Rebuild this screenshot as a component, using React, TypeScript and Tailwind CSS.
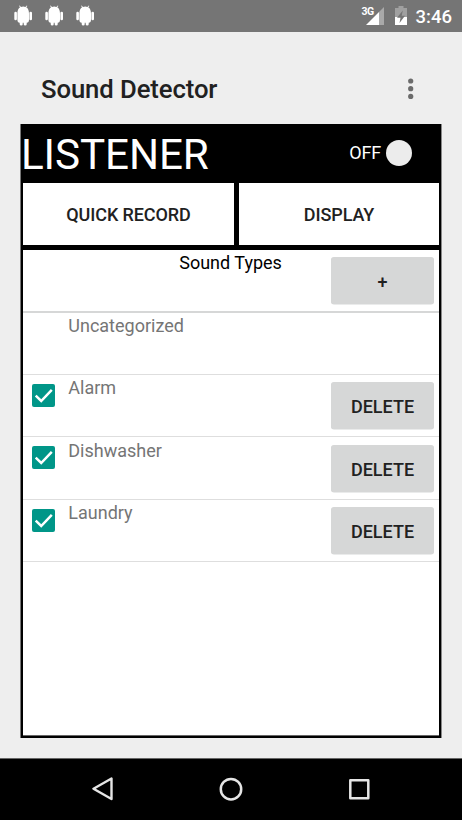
import React from "react";

function Robot() {
  return (
    <svg className="h-[22px] w-[18px]" viewBox="0 0 18 22" fill="#fff">
      <path d="M3.400 8.500C3.400 5 4.500 3.100 6.200 2.200L5 .9l.6-.4 1.400 1.400a7 7 0 0 1 4.400 0L12.800.5l.6.4-1.200 1.300c1.700.9 2.800 2.800 2.800 6.300v6q0 3.300-2.300 3.300v1.400q0 1.300-1.500 1.300t-1.500-1.300v-1.400h-1v1.400q0 1.300-1.500 1.300t-1.500-1.300v-1.400q-2.300 0-2.300-3.300Z" />
      <rect x="0.300" y="6.800" width="2.600" height="8.500" rx="1.200" />
      <rect x="15.400" y="6.800" width="2.600" height="8.500" rx="1.200" />
    </svg>
  );
}

function StatusBar() {
  return (
    <header className="flex h-8 shrink-0 items-start justify-between bg-[#757575] text-white">
      <div className="flex gap-[13px] pt-[5px] pl-[14px]">
        <Robot />
        <Robot />
        <Robot />
      </div>
      <div className="flex pr-[10px]">
        <span className="mt-[6px] w-[12px] text-[10.500px] leading-[12px] font-bold tracking-[-0.700px]">3G</span>
        <svg className="-ml-[8px] mt-[7px] h-[18px] w-[18px]" viewBox="0 0 18 18">
          <path d="M13 5 18 0v18h-5Z" fill="#a9a9a9" />
          <path d="M0 18 13 5v13Z" fill="#fff" />
        </svg>
        <svg className="mt-[6px] ml-[11px] h-[19px] w-[12px]" viewBox="0 0 12 19">
          <path d="M0 2h3.500V0h5v2H12v9H0Z" fill="#a0a0a0" />
          <path d="M0 11h12v8H0Z" fill="#fff" />
          <path d="M7.800 4.500 2 11.700h3.500L4.500 17 10 9.800H6.700Z" fill="#757575" />
        </svg>
        <span className="ml-[9px] text-[18.500px] leading-[34px] font-medium">3:46</span>
      </div>
    </header>
  );
}

function GrayButton({ label }: { label: string }) {
  return (
    <button className="mr-[5px] block h-[47px] w-[103px] rounded-[3px] bg-[#d6d7d7] pt-[2px] text-[18px] font-medium text-[#212121] shadow-[0_0.500px_0.500px_#d6d7d7]">
      {label}
    </button>
  );
}

function Check() {
  return (
    <svg className="h-[23px] w-[23px] rounded-[2px] bg-[#009688]" viewBox="0 0 23 23">
      <path d="M3.700 11.700 9.200 17 19.800 5.800" fill="none" stroke="#fff" strokeWidth="2.500" />
    </svg>
  );
}

const rows = [
  { name: "Alarm", frame: "h-[62px]", check: "pt-[9px]", text: "pt-0", button: "pt-[7.400px]" },
  { name: "Dishwasher", frame: "h-[63px]", check: "pt-[9px]", text: "pt-px", button: "pt-[8px]" },
  { name: "Laundry", frame: "h-[62px]", check: "pt-[8.500px]", text: "pt-0", button: "pt-[7px]" },
];

export default function App() {
  return (
    <div className="flex h-[820px] w-[462px] flex-col overflow-hidden bg-[#eeeeee] font-['Roboto',sans-serif]">
      <StatusBar />
      <div className="flex h-[92px] shrink-0 items-center justify-between pr-[48px] pl-[41px]">
        <h1 className="pt-[22px] text-[25.700px] leading-[30px] font-medium tracking-[-0.100px] text-[#212121]">Sound Detector</h1>
        <svg className="mt-[21px] h-[22px] w-[6px]" viewBox="0 0 6 22" fill="#6b6b6b">
          <circle cx="2.700" cy="3" r="2.600" />
          <circle cx="2.700" cy="10.700" r="2.600" />
          <circle cx="2.700" cy="18.400" r="2.600" />
        </svg>
      </div>

      <main className="mx-[20px] flex h-[614px] shrink-0 flex-col border-x border-l-[#777] border-r-[#888] bg-black px-[2px] pb-[2px]">
        <div className="flex h-[59px] shrink-0 items-start justify-between text-white">
          <div className="-ml-[2px] pt-[1px] text-[42.200px] leading-[60px] tracking-[-0.100px]">LISTENER</div>
          <div className="flex items-start pt-[15px] pr-[27px]">
            <span className="pt-px text-[18px] leading-[26px] tracking-[-0.200px]">OFF</span>
            <span className="mt-[0.600px] ml-[5px] h-[26px] w-[26px] rounded-full bg-[#ececec]" />
          </div>
        </div>

        <div className="flex h-[62px] shrink-0 gap-[5px] text-[18px] font-medium tracking-[-0.100px] text-[#212121]">
          <button className="w-[211px] bg-white pt-px">QUICK RECORD</button>
          <button className="flex-1 bg-white pt-px">DISPLAY</button>
        </div>

        <div className="mt-[5px] flex flex-1 flex-col border-b border-[#666] bg-white text-[18px] leading-[26px] text-[#757575]">
          <div className="flex h-[63px] shrink-0 justify-between border-b-2 border-[#d6d7d7] text-black">
            <span className="pl-[156.200px]">Sound Types</span>
            <div className="pt-[7.400px]">
              <GrayButton label="+" />
            </div>
          </div>
          <div className="h-[62px] shrink-0 border-b border-[#dedede] pl-[45.300px]">Uncategorized</div>
          {rows.map((row) => (
            <div key={row.name} className={`flex shrink-0 border-b border-[#dedede] pl-[9px] ${row.frame}`}>
              <div className={row.check}>
                <Check />
              </div>
              <span className={`flex-1 pl-[13.300px] ${row.text}`}>{row.name}</span>
              <div className={row.button}>
                <GrayButton label="DELETE" />
              </div>
            </div>
          ))}
        </div>
      </main>

      <div className="h-[20px] shrink-0" />
      <nav className="flex flex-1 items-start justify-between border-t border-[#666] bg-black pt-[18px] pr-[91px] pl-[91px]">
        <svg className="h-[26px] w-[24px]" viewBox="0 0 24 26" fill="none" stroke="#e5e5e5" strokeWidth="2.400" strokeLinejoin="round">
          <path d="M20.500 1.500v20.500L2.500 11.700Z" />
        </svg>
        <svg className="h-[26px] w-[26px]" viewBox="0 0 26 26" fill="none" stroke="#e5e5e5" strokeWidth="2.500">
          <circle cx="13" cy="12.200" r="10.200" />
        </svg>
        <svg className="h-[26px] w-[24px]" viewBox="0 0 24 26" fill="none" stroke="#e5e5e5" strokeWidth="2.500" strokeLinejoin="round">
          <rect x="3.300" y="3.300" width="18" height="18" />
        </svg>
      </nav>
    </div>
  );
}
